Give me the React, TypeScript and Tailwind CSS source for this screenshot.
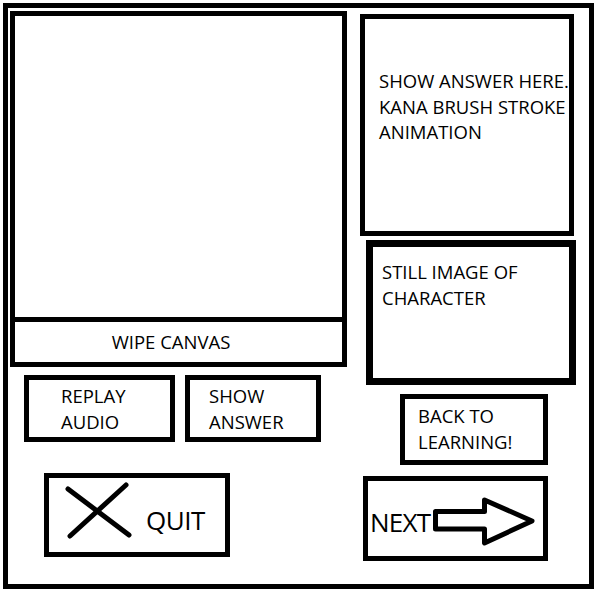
import type { ReactNode } from 'react'

const font = { fontFamily: '"Open Sans", "Noto Sans", sans-serif' }

function Label({ children, className = '' }: { children: ReactNode; className?: string }) {
  return <p className={`whitespace-nowrap text-[18.5px] leading-[25.5px] text-black ${className}`}>{children}</p>
}

function QuitX() {
  return (
    <svg width="70" height="60" viewBox="0 0 70 60" className="mt-[3px] ml-[15px] shrink-0">
      <line x1="4" y1="8" x2="65" y2="54" stroke="black" strokeWidth="5" strokeLinecap="round" />
      <line x1="62" y1="4" x2="6" y2="55" stroke="black" strokeWidth="5" strokeLinecap="round" />
    </svg>
  )
}

function NextArrow() {
  return (
    <svg width="110" height="56" viewBox="0 0 110 56" className="mt-[13px] shrink-0">
      <polygon
        points="5.5,17.5 54.5,17.5 54.5,6 102,27 54.5,49 54.5,35 5.5,35"
        fill="white"
        stroke="black"
        strokeWidth="5"
        strokeLinejoin="round"
      />
    </svg>
  )
}

export default function App() {
  return (
    <div className="h-[600px] w-[600px] bg-white" style={font}>
      <div className="ml-[3px] mt-[3px] flex h-[586px] w-[591px] border-[5px] border-black">
        {/* left column */}
        <div className="flex w-[340px] shrink-0 flex-col">
          <div className="ml-[2px] mt-[3px] flex h-[356px] w-[337px] flex-col border-[5px] border-black">
            <div className="h-[301px]" />
            <div className="flex flex-1 items-center justify-center border-t-[5px] border-black pr-[15px]">
              <Label>WIPE CANVAS</Label>
            </div>
          </div>

          <div className="mt-[8px] flex">
            <div className="ml-[16px] h-[67px] w-[151px] border-[5px] border-black pl-[32px] pt-[3px]">
              <Label>
                REPLAY
                <br />
                AUDIO
              </Label>
            </div>
            <div className="ml-[10px] h-[67px] w-[136px] border-[5px] border-black pl-[19px] pt-[3px]">
              <Label>
                SHOW
                <br />
                ANSWER
              </Label>
            </div>
          </div>

          <div className="ml-[36px] mt-[31px] flex h-[84px] w-[186px] items-start border-[5px] border-black">
            <QuitX />
            <span className="ml-[12px] mt-[24px] text-[26px] leading-[36px] tracking-[-0.5px] text-black">QUIT</span>
          </div>
        </div>

        {/* right column */}
        <div className="flex flex-col">
          <div className="ml-[12px] mt-[6px] h-[222px] w-[214px] border-[5px] border-black pl-[14px] pt-[49px]">
            <Label>
              SHOW ANSWER HERE.
              <br />
              KANA BRUSH STROKE
              <br />
              ANIMATION
            </Label>
          </div>

          <div className="ml-[18px] mt-[4px] h-[145px] w-[210px] border-[7px] border-black pl-[9px] pt-[12px]">
            <Label>
              STILL IMAGE OF
              <br />
              CHARACTER
            </Label>
          </div>

          <div className="ml-[52px] mt-[9px] h-[71px] w-[148px] border-[5px] border-black pl-[13px] pt-[4px]">
            <Label>
              BACK TO
              <br />
              LEARNING!
            </Label>
          </div>

          <div className="ml-[15px] mt-[11px] flex h-[85px] w-[185px] items-start border-[5px] border-black pl-[2px]">
            <span className="mt-[24px] w-[60px] text-[26px] leading-[34px] tracking-[-0.8px] text-black">NEXT</span>
            <NextArrow />
          </div>
        </div>
      </div>
    </div>
  )
}
